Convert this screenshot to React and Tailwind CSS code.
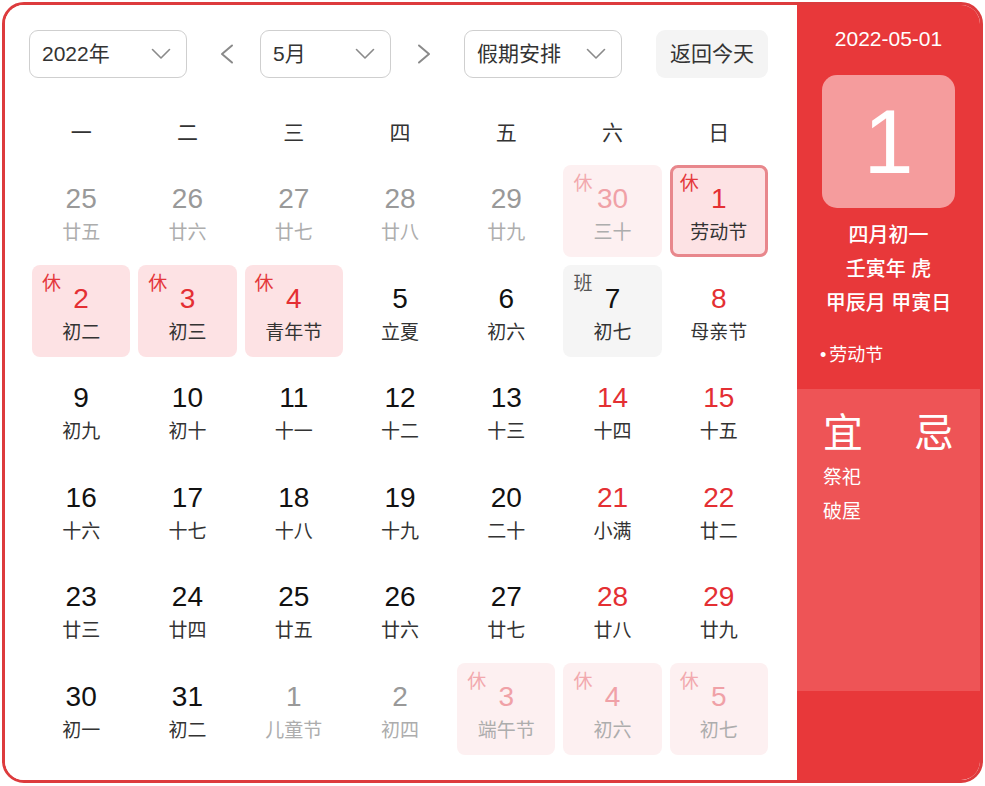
import React from "react";

const R = "rest", S = "sel", O = "other", OR = "otherRest", W = "work", K = "wk", N = "norm";

const rows = [
  [[25, "廿五", O], [26, "廿六", O], [27, "廿七", O], [28, "廿八", O], [29, "廿九", O], [30, "三十", OR], [1, "劳动节", S]],
  [[2, "初二", R], [3, "初三", R], [4, "青年节", R], [5, "立夏", N], [6, "初六", N], [7, "初七", W], [8, "母亲节", K]],
  [[9, "初九", N], [10, "初十", N], [11, "十一", N], [12, "十二", N], [13, "十三", N], [14, "十四", K], [15, "十五", K]],
  [[16, "十六", N], [17, "十七", N], [18, "十八", N], [19, "十九", N], [20, "二十", N], [21, "小满", K], [22, "廿二", K]],
  [[23, "廿三", N], [24, "廿四", N], [25, "廿五", N], [26, "廿六", N], [27, "廿七", N], [28, "廿八", K], [29, "廿九", K]],
  [[30, "初一", N], [31, "初二", N], [1, "儿童节", O], [2, "初四", O], [3, "端午节", OR], [4, "初六", OR], [5, "初七", OR]],
];

function Cell({ n, l, t }) {
  let box = "relative h-[92px] rounded-[8px] flex flex-col items-center";
  let num = "text-[28px] leading-[30px]";
  let lun = "text-[19px] leading-[24px] mt-[7px]";
  let tag = null;
  let tagCls = "absolute top-[9px] left-[10px] text-[19px] leading-[19px]";
  if (t === O) {
    box += " pt-[19px]";
    num += " text-[#999999]";
    lun += " text-[#adadad]";
  } else if (t === OR) {
    box += " pt-[19px] bg-[#fdf0f1]";
    num += " text-[#f0a1a7]";
    lun += " text-[#adadad]";
    tag = "休";
    tagCls += " text-[#f2a9ae]";
  } else if (t === R) {
    box += " pt-[19px] bg-[#fde2e4]";
    num += " text-[#e42f33]";
    lun += " text-[#333333]";
    tag = "休";
    tagCls += " text-[#e4383c]";
  } else if (t === S) {
    box += " pt-[16px] bg-[#fde2e4] border-[3px] border-[#e8878c]";
    num += " text-[#e42f33]";
    lun += " text-[#333333]";
    tag = "休";
    tagCls = "absolute top-[6px] left-[7px] text-[19px] leading-[19px] text-[#e4383c]";
  } else if (t === W) {
    box += " pt-[19px] bg-[#f5f5f5]";
    num += " text-[#111111]";
    lun += " text-[#333333]";
    tag = "班";
    tagCls += " text-[#555555]";
  } else if (t === K) {
    box += " pt-[19px]";
    num += " text-[#e42f33]";
    lun += " text-[#333333]";
  } else {
    box += " pt-[19px]";
    num += " text-[#111111]";
    lun += " text-[#333333]";
  }
  return (
    <div className={box}>
      {tag && <span className={tagCls}>{tag}</span>}
      <span className={num}>{n}</span>
      <span className={lun}>{l}</span>
    </div>
  );
}

function Down() {
  return (
    <svg width="20" height="12" viewBox="0 0 20 12" fill="none">
      <polyline points="1.5,1.5 10,10 18.5,1.5" stroke="#8a8a8a" strokeWidth="1.6" strokeLinecap="round" strokeLinejoin="round" />
    </svg>
  );
}

function Arrow({ dir }) {
  const pts = dir === "left" ? "12,1.5 2,10 12,18.5" : "2,1.5 12,10 2,18.5";
  return (
    <svg width="14" height="20" viewBox="0 0 14 20" fill="none">
      <polyline points={pts} stroke="#8a8a8a" strokeWidth="2" strokeLinecap="round" strokeLinejoin="round" />
    </svg>
  );
}

function Select({ w, label }) {
  return (
    <div className={`${w} h-[48px] border border-[#cfcfcf] rounded-[9px] flex items-center justify-between pl-[12px] pr-[15px] text-[21px] text-[#333333]`}>
      <span>{label}</span>
      <Down />
    </div>
  );
}

export default function App() {
  return (
    <div className="font-['Liberation_Sans','Noto_Sans_CJK_SC',sans-serif] bg-white w-[985px] h-[786px]">
      <div className="ml-[2px] mt-[2px] w-[981px] h-[781px] border-[3px] border-[#dd3b3d] rounded-[22px] overflow-hidden flex">
        <div className="w-[792px] bg-white pl-[24px] pt-[25px]">
          <div className="flex items-center h-[48px]">
            <Select w="w-[158px]" label="2022年" />
            <div className="ml-[33px] mr-[26px] flex items-center"><Arrow dir="left" /></div>
            <Select w="w-[131px]" label="5月" />
            <div className="ml-[26px] mr-[33px] flex items-center"><Arrow dir="right" /></div>
            <Select w="w-[158px]" label="假期安排" />
            <div className="ml-[34px] w-[112px] h-[48px] rounded-[9px] bg-[#f4f4f4] flex items-center justify-center text-[21px] text-[#333333]">返回今天</div>
          </div>
          <div className="ml-[3px] w-[736px] mt-[35px] grid grid-cols-7 gap-x-[8px] h-[40px] items-center text-[21px] text-[#333333]">
            {["一", "二", "三", "四", "五", "六", "日"].map((d) => (
              <div key={d} className="text-center">{d}</div>
            ))}
          </div>
          <div className="ml-[3px] w-[736px] mt-[12px] grid grid-cols-7 gap-x-[8px] gap-y-[7.6px]">
            {rows.flat().map((c, i) => (
              <Cell key={i} n={c[0]} l={c[1]} t={c[2]} />
            ))}
          </div>
        </div>
        <div className="flex-1 bg-[#e8383a] flex flex-col text-white">
          <div className="text-center text-[21px] leading-[24px] mt-[22px]">2022-05-01</div>
          <div className="mx-auto mt-[24px] w-[133px] h-[133px] rounded-[15px] bg-[#f59c9d] flex items-center justify-center text-[90px] leading-none">1</div>
          <div className="mt-[10px] flex flex-col items-center text-[20px] leading-[34px] font-medium">
            <div>四月初一</div>
            <div>壬寅年 虎</div>
            <div>甲辰月 甲寅日</div>
          </div>
          <div className="mt-[23px] pl-[23px] text-[18px] leading-[24px] flex items-center gap-[3px]">
            <span>•</span>
            <span>劳动节</span>
          </div>
          <div className="mt-[22px] h-[302px] bg-[#ee5456] px-[26px] pt-[22px]">
            <div className="flex justify-between text-[40px] leading-[44px]">
              <span>宜</span>
              <span>忌</span>
            </div>
            <div className="mt-[6px] text-[19px] leading-[34px]">
              <div>祭祀</div>
              <div>破屋</div>
            </div>
          </div>
          <div className="flex-1" />
        </div>
      </div>
    </div>
  );
}
